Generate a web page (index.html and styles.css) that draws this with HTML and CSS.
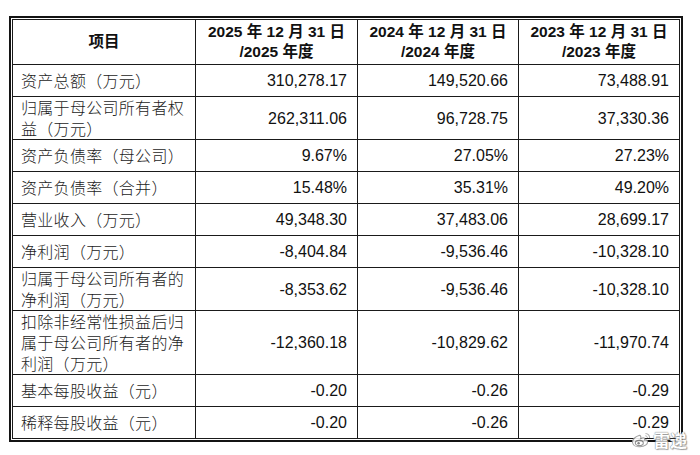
FILE: index.html
```html
<!DOCTYPE html>
<html lang="zh-CN">
<head>
<meta charset="utf-8">
<title>财务数据</title>
<link rel="stylesheet" href="styles.css">
</head>
<body>
<div class="page">
  <div class="frame">
    <div class="grid">
      <div class="cell head">项目</div>
      <div class="cell head">2025 年 12 月 31 日<br>/2025 年度</div>
      <div class="cell head">2024 年 12 月 31 日<br>/2024 年度</div>
      <div class="cell head">2023 年 12 月 31 日<br>/2023 年度</div>

      <div class="cell label">资产总额（万元）</div>
      <div class="cell num">310,278.17</div>
      <div class="cell num">149,520.66</div>
      <div class="cell num">73,488.91</div>

      <div class="cell label">归属于母公司所有者权益（万元）</div>
      <div class="cell num">262,311.06</div>
      <div class="cell num">96,728.75</div>
      <div class="cell num">37,330.36</div>

      <div class="cell label">资产负债率（母公司）</div>
      <div class="cell num">9.67%</div>
      <div class="cell num">27.05%</div>
      <div class="cell num">27.23%</div>

      <div class="cell label">资产负债率（合并）</div>
      <div class="cell num">15.48%</div>
      <div class="cell num">35.31%</div>
      <div class="cell num">49.20%</div>

      <div class="cell label">营业收入（万元）</div>
      <div class="cell num">49,348.30</div>
      <div class="cell num">37,483.06</div>
      <div class="cell num">28,699.17</div>

      <div class="cell label">净利润（万元）</div>
      <div class="cell num">-8,404.84</div>
      <div class="cell num">-9,536.46</div>
      <div class="cell num">-10,328.10</div>

      <div class="cell label">归属于母公司所有者的净利润（万元）</div>
      <div class="cell num">-8,353.62</div>
      <div class="cell num">-9,536.46</div>
      <div class="cell num">-10,328.10</div>

      <div class="cell label">扣除非经常性损益后归属于母公司所有者的净利润（万元）</div>
      <div class="cell num">-12,360.18</div>
      <div class="cell num">-10,829.62</div>
      <div class="cell num">-11,970.74</div>

      <div class="cell label">基本每股收益（元）</div>
      <div class="cell num">-0.20</div>
      <div class="cell num">-0.26</div>
      <div class="cell num">-0.29</div>

      <div class="cell label">稀释每股收益（元）</div>
      <div class="cell num">-0.20</div>
      <div class="cell num">-0.26</div>
      <div class="cell num">-0.29</div>
    </div>
  </div>
  <div class="watermark">
    <svg class="wb-logo" width="20" height="16" viewBox="0 0 20 16">
      <path d="M8 3.5C4.5 4.5 1 7.5 1.5 10.5C2 13.5 5.5 15 9 14.8C13.5 14.5 17 12.3 16.6 9.6C16.3 8 14.6 7.6 13.5 8C14 6.6 13.6 5.6 12 5.8C11 6 10 6.6 9.6 6.7C10.3 4.6 9.6 3.1 8 3.5Z" fill="#fff" stroke="#9a9a9a" stroke-width="1.1"/>
      <ellipse cx="8.3" cy="11" rx="4" ry="2.6" fill="#fff" stroke="#8a8a8a" stroke-width="1.1"/>
      <circle cx="7.6" cy="11.2" r="1.2" fill="#777"/>
      <path d="M14.5 1.5C17 1.6 18.8 3.5 18.6 6" fill="none" stroke="#aaa" stroke-width="1.1"/>
      <path d="M14.3 3.8C15.6 3.9 16.5 4.8 16.4 6" fill="none" stroke="#aaa" stroke-width="1"/>
    </svg>
    <span class="wb-text">雷递</span>
  </div>
</div>
</body>
</html>
```

FILE: styles.css
```css
html, body {
  margin: 0;
  padding: 0;
  background: #ffffff;
}

.page {
  position: relative;
  width: 700px;
  height: 455px;
  padding: 16px 0 0 9px;
  box-sizing: border-box;
}

.frame {
  width: fit-content;
  border: 2px solid #141414;
  padding: 1px;
}

.grid {
  display: grid;
  grid-template-columns: 183px 162px 161px 161px;
  border-left: 1px solid #1a1a1a;
  border-top: 1px solid #1a1a1a;
}

.cell {
  display: flex;
  align-items: center;
  min-height: 31px;
  line-height: 21px;
  border-right: 1px solid #1a1a1a;
  border-bottom: 1px solid #1a1a1a;
  color: #111;
}

.head {
  min-height: 44px;
  justify-content: center;
  text-align: center;
  font-family: "Liberation Sans", "Noto Sans CJK SC", sans-serif;
  font-weight: bold;
  font-size: 15.5px;
  line-height: 20px;
}

.label {
  padding: 0 6px 0 8px;
  font-family: "Noto Sans CJK SC", sans-serif;
  font-weight: 300;
  font-size: 16px;
  letter-spacing: 0.3px;
  color: #1c1c1c;
}

.num {
  justify-content: flex-end;
  padding-right: 10px;
  font-family: "Liberation Sans", Arial, sans-serif;
  font-size: 16px;
}

.watermark {
  position: absolute;
  left: 631px;
  top: 432px;
  display: flex;
  align-items: flex-end;
  gap: 2px;
  opacity: 0.9;
}

.wb-logo {
  display: block;
  margin-bottom: 0;
}

.wb-text {
  font-family: "Noto Sans CJK SC", sans-serif;
  font-weight: bold;
  font-size: 17px;
  line-height: 16px;
  color: #ffffff;
  text-shadow: 0 0 1px #7a7a7a, 0 0 1px #7a7a7a, 1px 1px 1px #999;
}
```
